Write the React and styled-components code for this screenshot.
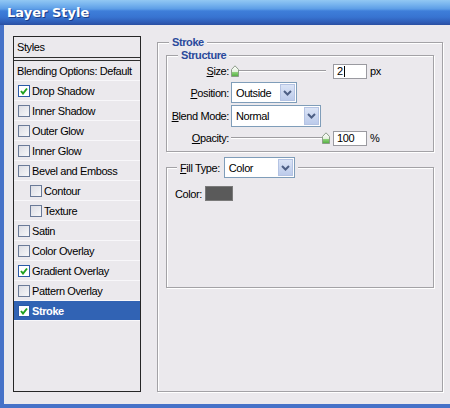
import React from "react";
import styled, { createGlobalStyle } from "styled-components";

const GlobalStyle = createGlobalStyle`
  html, body { margin: 0; padding: 0; background: #ebe9ed; overflow: hidden; }
`;

const Window = styled.div`
  width: 450px;
  height: 408px;
  display: flex;
  flex-direction: column;
  font-family: "Liberation Sans", Arial, sans-serif;
  font-size: 11px;
  letter-spacing: -0.4px;
  color: #000;
`;

const TitleBar = styled.div`
  height: 25px;
  flex: none;
  display: flex;
  align-items: center;
  padding-left: 7px;
  background: linear-gradient(
    to bottom,
    #92c8f3 0px,
    #7ab6ef 4px,
    #5c9de6 9px,
    #3e7ed9 11px,
    #3874d1 17px,
    #2f5eb8 22px,
    #2a4fa2 25px
  );
  color: #fff;
  font: bold 13px "DejaVu Sans", sans-serif;
  letter-spacing: 0;
  text-shadow: 1px 1px 0 #1b3c86;
`;

const Frame = styled.div`
  flex: 1;
  display: flex;
  align-items: flex-start;
  gap: 16px;
  padding: 11px 0 0 9px;
  background: #ebe9ed;
  border-left: 4px solid #4672c8;
  border-bottom: 4px solid #4672c8;
`;

const StylesPanel = styled.div`
  box-sizing: border-box;
  width: 128px;
  height: 356px;
  border: 1px solid #262626;
  display: flex;
  flex-direction: column;
`;

const PanelHeader = styled.div`
  height: 20px;
  flex: none;
  display: flex;
  align-items: center;
  padding-left: 3px;
  border-bottom: 4px double #2e2e2e;
`;

const StyleRow = styled.div`
  height: 19px;
  flex: none;
  display: flex;
  align-items: center;
  gap: 2px;
  padding-left: ${(p) => p.$indent}px;
  border-bottom: 1px solid #f8f7fa;
  background: ${(p) => (p.$selected ? "#3163b4" : "transparent")};
  color: ${(p) => (p.$selected ? "#fff" : "#000")};
  font-weight: ${(p) => (p.$selected ? "bold" : "normal")};
`;

const Box = styled.span`
  box-sizing: border-box;
  width: 12px;
  height: 12px;
  flex: none;
  display: flex;
  align-items: center;
  justify-content: center;
  border: 1px solid ${(p) => (p.$checked ? "#2b5aa8" : "#6a7a98")};
  background: ${(p) =>
    p.$checked ? "#fff" : "linear-gradient(135deg, #dcdde4, #f7f7f9)"};
`;

const Group = styled.fieldset`
  box-sizing: border-box;
  margin: 0;
  min-width: 0;
  border: 1px solid #a3a2a6;
  box-shadow: inset 1px 1px 0 #fff, 1px 1px 0 #fff;
`;

const StrokeGroup = styled(Group)`
  width: 286px;
  height: 356px;
  padding: 0 8px;
`;

const StructureGroup = styled(Group)`
  margin-top: 1px;
  padding: 0 0 2px 0;
`;

const FillGroup = styled(Group)`
  margin-top: 5px;
  height: 131px;
  padding: 8px 0 0 8px;
`;

const Legend = styled.legend`
  padding: 0 3px;
  margin-left: ${(p) => p.$offset}px;
  line-height: 12px;
  font-weight: bold;
  color: #2a4a9c;
  background: #ebe9ed;
`;

const FillLegend = styled.legend`
  padding: 0 3px;
  margin-left: 2px;
  display: flex;
  align-items: center;
  gap: 4px;
  background: #ebe9ed;
`;

const FormGrid = styled.div`
  display: grid;
  grid-template-columns: 62px 1fr;
  grid-template-rows: 20px 23px 23px 22px;
  column-gap: 2px;
  align-items: center;
`;

const Label = styled.span`
  justify-self: end;
  white-space: nowrap;
`;

const Controls = styled.div`
  display: flex;
  align-items: center;
`;

const Slider = styled.div`
  position: relative;
  width: 95px;
  height: 12px;
  display: flex;
  align-items: center;
  margin-right: 7px;
`;

const Track = styled.div`
  width: 100%;
  height: 0;
  border-top: 1px solid #9d9ca0;
  border-bottom: 1px solid #fff;
`;

const Thumb = styled.svg`
  position: absolute;
  top: 0;
`;

const NumInput = styled.div`
  box-sizing: border-box;
  width: 34px;
  height: 15px;
  border: 1px solid #9a9aa0;
  background: #fff;
  padding-left: 3px;
  display: flex;
  align-items: center;
  margin-right: 3px;
`;

const Caret = styled.span`
  width: 1px;
  height: 11px;
  background: #000;
  margin-left: 1px;
`;

const Select = styled.div`
  box-sizing: border-box;
  width: ${(p) => p.$w}px;
  height: ${(p) => p.$h}px;
  border: 1px solid #7f9db9;
  background: #fff;
  display: flex;
  align-items: center;
  justify-content: space-between;
  padding: 1px 1px 1px 4px;
`;

const ArrowBtn = styled.span`
  box-sizing: border-box;
  width: 15px;
  height: 100%;
  display: flex;
  align-items: center;
  justify-content: center;
  border: 1px solid #b4c3e3;
  background: linear-gradient(to bottom, #dbe4f6, #bccbeb);
`;

const ColorRow = styled.div`
  display: flex;
  align-items: center;
  gap: 3px;
`;

const Swatch = styled.span`
  box-sizing: border-box;
  width: 28px;
  height: 15px;
  background: #5a5a5a;
  border: 1px solid #7a7a7a;
`;

const Check = () => (
  <svg width="8" height="8" viewBox="0 0 8 8">
    <polyline points="1,4 3,6.5 7,1.5" fill="none" stroke="#21a121" strokeWidth="2" />
  </svg>
);

const Chevron = () => (
  <svg width="9" height="6" viewBox="0 0 9 6">
    <polyline points="1,1 4.5,4.5 8,1" fill="none" stroke="#4d5f85" strokeWidth="2" />
  </svg>
);

const SliderThumb = ({ left }) => (
  <Thumb width="8" height="12" viewBox="0 0 8 12" style={{ left }}>
    <defs>
      <linearGradient id="tg" x1="0" y1="0" x2="0" y2="1">
        <stop offset="0" stopColor="#ffffff" />
        <stop offset="0.55" stopColor="#e3f0dd" />
        <stop offset="0.6" stopColor="#8fd27c" />
        <stop offset="1" stopColor="#4fae3c" />
      </linearGradient>
    </defs>
    <path d="M0.5 4.5 L4 0.8 L7.5 4.5 L7.5 11.5 L0.5 11.5 Z" fill="url(#tg)" stroke="#8d9c8a" strokeWidth="1" />
  </Thumb>
);

const DropSelect = ({ w, h, value }) => (
  <Select $w={w} $h={h}>
    <span>{value}</span>
    <ArrowBtn>
      <Chevron />
    </ArrowBtn>
  </Select>
);

const rows = [
  { label: "Blending Options: Default", indent: 3, plain: true },
  { label: "Drop Shadow", indent: 4, checked: true },
  { label: "Inner Shadow", indent: 4 },
  { label: "Outer Glow", indent: 4 },
  { label: "Inner Glow", indent: 4 },
  { label: "Bevel and Emboss", indent: 4 },
  { label: "Contour", indent: 16 },
  { label: "Texture", indent: 16 },
  { label: "Satin", indent: 4 },
  { label: "Color Overlay", indent: 4 },
  { label: "Gradient Overlay", indent: 4, checked: true },
  { label: "Pattern Overlay", indent: 4 },
  { label: "Stroke", indent: 4, checked: true, selected: true },
];

export default function App() {
  return (
    <>
      <GlobalStyle />
      <Window>
        <TitleBar>Layer Style</TitleBar>
        <Frame>
          <StylesPanel>
            <PanelHeader>Styles</PanelHeader>
            {rows.map((r) => (
              <StyleRow key={r.label} $indent={r.indent} $selected={r.selected}>
                {!r.plain && <Box $checked={r.checked}>{r.checked && <Check />}</Box>}
                {r.label}
              </StyleRow>
            ))}
          </StylesPanel>

          <StrokeGroup>
            <Legend $offset={3}>Stroke</Legend>
            <StructureGroup>
              <Legend $offset={11}>Structure</Legend>
              <FormGrid>
                <Label>
                  <u>S</u>ize:
                </Label>
                <Controls>
                  <Slider>
                    <Track />
                    <SliderThumb left={0} />
                  </Slider>
                  <NumInput>
                    2<Caret />
                  </NumInput>
                  <span>px</span>
                </Controls>

                <Label>
                  <u>P</u>osition:
                </Label>
                <Controls>
                  <DropSelect w={66} h={21} value="Outside" />
                </Controls>

                <Label>
                  <u>B</u>lend Mode:
                </Label>
                <Controls>
                  <DropSelect w={90} h={22} value="Normal" />
                </Controls>

                <Label>
                  <u>O</u>pacity:
                </Label>
                <Controls>
                  <Slider>
                    <Track />
                    <SliderThumb left={91} />
                  </Slider>
                  <NumInput>100</NumInput>
                  <span>%</span>
                </Controls>
              </FormGrid>
            </StructureGroup>

            <FillGroup>
              <FillLegend>
                <span>
                  <u>F</u>ill Type:
                </span>
                <DropSelect w={71} h={21} value="Color" />
              </FillLegend>
              <ColorRow>
                <span>Color:</span>
                <Swatch />
              </ColorRow>
            </FillGroup>
          </StrokeGroup>
        </Frame>
      </Window>
    </>
  );
}
